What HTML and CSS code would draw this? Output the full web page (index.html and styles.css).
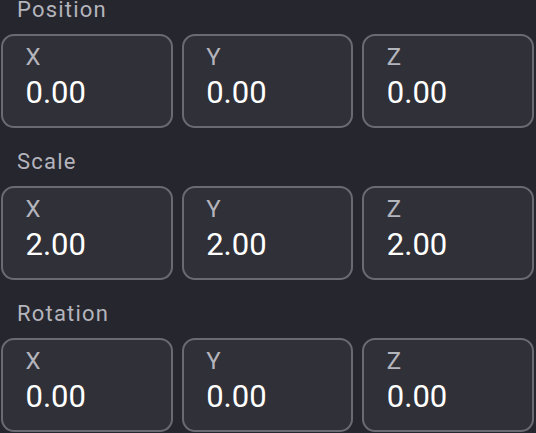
FILE: index.html
```html
<!DOCTYPE html>
<html>
<head>
<meta charset="utf-8">
<link rel="stylesheet" href="styles.css">
</head>
<body>
<div class="panel">
  <section class="group">
    <div class="group-label">Position</div>
    <div class="fields">
      <div class="field"><div class="axis">X</div><div class="value">0.00</div></div>
      <div class="field"><div class="axis">Y</div><div class="value">0.00</div></div>
      <div class="field"><div class="axis">Z</div><div class="value">0.00</div></div>
    </div>
  </section>
  <section class="group">
    <div class="group-label">Scale</div>
    <div class="fields">
      <div class="field"><div class="axis">X</div><div class="value">2.00</div></div>
      <div class="field"><div class="axis">Y</div><div class="value">2.00</div></div>
      <div class="field"><div class="axis">Z</div><div class="value">2.00</div></div>
    </div>
  </section>
  <section class="group">
    <div class="group-label">Rotation</div>
    <div class="fields">
      <div class="field"><div class="axis">X</div><div class="value">0.00</div></div>
      <div class="field"><div class="axis">Y</div><div class="value">0.00</div></div>
      <div class="field"><div class="axis">Z</div><div class="value">0.00</div></div>
    </div>
  </section>
</div>
</body>
</html>
```

FILE: styles.css
```css
html, body {
  margin: 0;
  padding: 0;
  background: #26262e;
  font-family: Roboto, "Liberation Sans", sans-serif;
  overflow: hidden;
}
.panel {
  display: flex;
  flex-direction: column;
  gap: 23px;
  padding: 0 2px 0 1px;
  margin-top: -1.5px;
}
.group {
  display: flex;
  flex-direction: column;
  gap: 13px;
}
.group-label {
  padding-left: 16px;
  font-size: 22px;
  line-height: 22px;
  letter-spacing: 1.2px;
  color: #b4b4bc;
}
.fields {
  display: grid;
  grid-template-columns: repeat(3, 1fr);
  gap: 9px;
}
.field {
  height: 94px;
  box-sizing: border-box;
  background: #303038;
  border: 2px solid #6a6a72;
  border-radius: 13px;
  padding: 9px 20px 0 22.5px;
  display: flex;
  flex-direction: column;
  gap: 8.5px;
}
.axis {
  font-size: 24px;
  line-height: 24px;
  color: #b4b4bc;
}
.value {
  font-size: 31px;
  line-height: 31px;
  color: #ffffff;
}
```
